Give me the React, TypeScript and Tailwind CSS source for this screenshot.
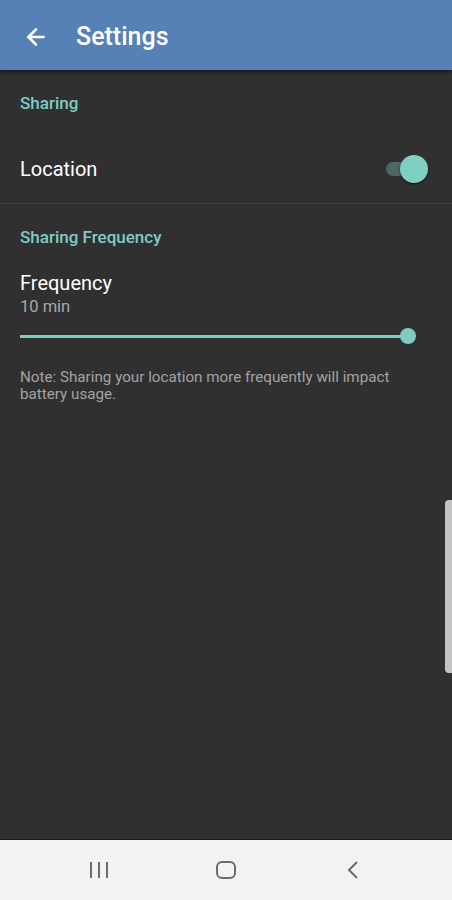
import { ArrowLeft } from 'lucide-react'

const font = { fontFamily: 'Roboto, "Noto Sans", sans-serif' }

function SectionTitle({ children }: { children: string }) {
  return <div className="px-5 text-[17px] font-medium leading-5 text-[#80cbc4]">{children}</div>
}

export default function App() {
  return (
    <div className="relative flex h-[900px] w-[452px] flex-col overflow-hidden bg-[#303030]" style={font}>
      {/* Toolbar */}
      <div className="flex h-[70px] shrink-0 items-center bg-[#5681b5] pt-[4px] shadow-[0_2px_3px_rgba(0,0,0,0.5)]">
        <ArrowLeft className="ml-[23px] h-[26px] w-[26px] text-white" strokeWidth={2.4} />
        <div className="ml-[27px] text-[25px] font-medium text-white">Settings</div>
      </div>

      {/* Content */}
      <div className="flex-1">
        <div className="pt-[23px]">
          <SectionTitle>Sharing</SectionTitle>
        </div>

        <div className="flex h-[90px] items-center justify-between pl-5 pr-6 pt-[22px]">
          <div className="text-[20px] text-white">Location</div>
          <div className="relative flex h-[28px] w-[42px] items-center">
            <div className="h-[14px] w-[38px] rounded-full bg-[#4d6763]" />
            <div className="absolute right-0 top-0 h-[28px] w-[28px] rounded-full bg-[#7fcfc3] shadow-[0_1px_2px_rgba(0,0,0,0.7)]" />
          </div>
        </div>

        <div className="h-px bg-[#414141]" />

        <div className="pt-[23px]">
          <SectionTitle>Sharing Frequency</SectionTitle>
        </div>

        <div className="px-5 pt-[24px]">
          <div className="text-[20px] leading-6 text-white">Frequency</div>
          <div className="mt-[2px] text-[16.5px] leading-5 text-[#a8a8a8]">10 min</div>
        </div>

        <div className="relative mx-5 mt-[10px] flex h-[18px] w-[396px] items-center">
          <div className="h-[3px] w-[388px] bg-[#80cbc4]" />
          <div className="absolute right-0 top-[1px] h-[16px] w-[16px] rounded-full bg-[#80cbc4]" />
        </div>

        <div className="px-5 pt-[24px] text-[15.2px] leading-[17px] text-[#a3a3a3]">
          Note: Sharing your location more frequently will impact battery usage.
        </div>
      </div>

      {/* Scrollbar */}
      <div className="absolute right-0 top-[500px] h-[173px] w-[7px] rounded-l-[4px] bg-[#c4c4c4]" />

      {/* Navigation bar */}
      <div className="grid h-[61px] shrink-0 grid-cols-3 items-center justify-items-center border-t border-[#1a1a1a] bg-[#f2f2f2] px-[36px]">
        <svg width="22" height="18" viewBox="0 0 22 18">
          <path d="M3 1v16M11 1v16M19 1v16" stroke="#6b6b6b" strokeWidth="2" />
        </svg>
        <svg width="22" height="20" viewBox="0 0 22 20">
          <rect x="2" y="2" width="18" height="16" rx="5" fill="none" stroke="#6b6b6b" strokeWidth="2" />
        </svg>
        <svg width="16" height="20" viewBox="0 0 16 20">
          <path d="M12 2L4 10l8 8" fill="none" stroke="#6b6b6b" strokeWidth="2" />
        </svg>
      </div>
    </div>
  )
}
